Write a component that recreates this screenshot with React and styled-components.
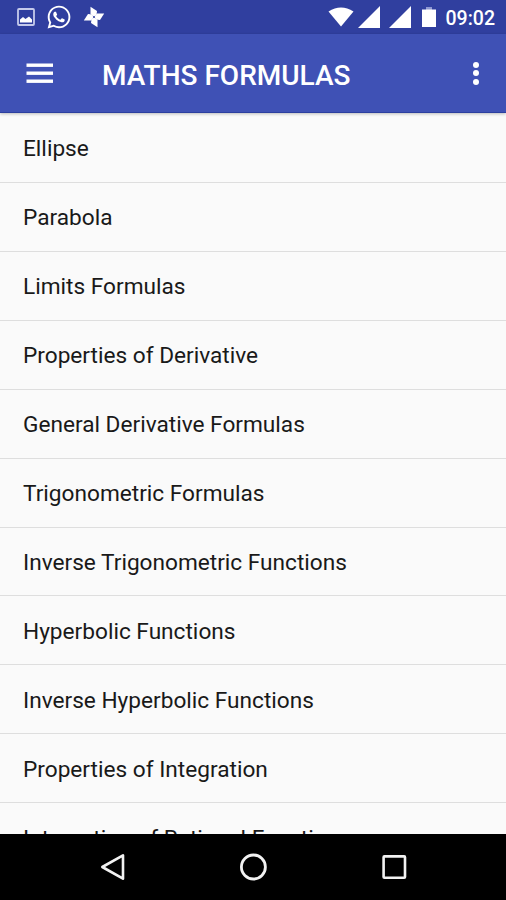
import React from 'react'
import styled, { createGlobalStyle } from 'styled-components'
import { FaWhatsapp } from 'react-icons/fa'

const formulas = [
  'Ellipse',
  'Parabola',
  'Limits Formulas',
  'Properties of Derivative',
  'General Derivative Formulas',
  'Trigonometric Formulas',
  'Inverse Trigonometric Functions',
  'Hyperbolic Functions',
  'Inverse Hyperbolic Functions',
  'Properties of Integration',
  'Integration of Rational Functions',
]

function PictureIcon() {
  return (
    <svg width="18" height="18" viewBox="0 0 18 18">
      <rect x="1" y="1" width="16" height="16" rx="1" fill="none" stroke="#c5caeb" strokeWidth="1.8" />
      <path d="M3 14.5v-3l3-2.5 2.5 2L12 8.500l3 3v3z" fill="#fff" />
    </svg>
  )
}

function PinwheelIcon() {
  return (
    <svg width="22" height="22" viewBox="0 0 22 22" fill="#fff">
      {[0, 90, 180, 270].map((angle) => (
        <path key={angle} d="M7.500 0.800L14 5L13.500 9.500L10.500 10.300L7.500 8z" transform={`rotate(${angle} 11 11)`} />
      ))}
    </svg>
  )
}

function WifiIcon() {
  return (
    <svg width="26" height="20" viewBox="0 0 26 20">
      <path d="M0.500 4.500Q13-3.500 25.500 4.500L13 19.500z" fill="#fff" />
    </svg>
  )
}

function SignalIcon() {
  return (
    <svg width="22" height="22" viewBox="0 0 22 22">
      <path d="M22 0v22H0z" fill="#fff" />
    </svg>
  )
}

function BatteryIcon() {
  return (
    <svg width="17" height="20" viewBox="0 0 17 20">
      <path d="M6 0h6v3H6z" fill="#8f98d2" />
      <path d="M2 2.500h14V20H2z" fill="#fff" />
    </svg>
  )
}

function MenuIcon() {
  return (
    <svg width="27" height="21" viewBox="0 0 27 21" fill="#fff">
      <rect x="0.500" y="0.500" width="26.500" height="3.400" />
      <rect x="0.500" y="8.500" width="26.500" height="3.400" />
      <rect x="0.500" y="16.500" width="26.500" height="3.400" />
    </svg>
  )
}

export default function App() {
  return (
    <Screen>
      <GlobalStyle />
      <StatusBar>
        <Notifications>
          <PictureIcon />
          <FaWhatsapp size={26} />
          <PinwheelIcon />
        </Notifications>
        <System>
          <Signals>
            <WifiIcon />
            <SignalIcon />
          </Signals>
          <SignalIcon />
          <BatteryIcon />
          <Clock>09:02</Clock>
        </System>
      </StatusBar>
      <Toolbar>
        <MenuButton aria-label="Menu">
          <MenuIcon />
        </MenuButton>
        <Title>MATHS FORMULAS</Title>
        <MoreButton aria-label="More options">
          <Dot />
          <Dot />
          <Dot />
        </MoreButton>
      </Toolbar>
      <List>
        {formulas.map((name) => (
          <Row key={name}>{name}</Row>
        ))}
      </List>
      <NavBar>
        <NavButton aria-label="Back">
          <svg width="28" height="30" viewBox="0 0 28 30">
            <path d="M25 3.300v23.400L4.300 15z" fill="none" stroke="#f2f2f2" strokeWidth="2.600" strokeLinejoin="round" />
          </svg>
        </NavButton>
        <NavButton aria-label="Home">
          <svg width="28" height="28" viewBox="0 0 28 28">
            <circle cx="14.400" cy="14" r="12" fill="none" stroke="#f2f2f2" strokeWidth="2.800" />
          </svg>
        </NavButton>
        <NavButton aria-label="Recent apps">
          <svg width="28" height="28" viewBox="0 0 28 28">
            <rect x="3.600" y="3.400" width="21.400" height="21.400" rx="0.800" fill="none" stroke="#f2f2f2" strokeWidth="2.600" />
          </svg>
        </NavButton>
      </NavBar>
    </Screen>
  )
}

const GlobalStyle = createGlobalStyle`
  * {
    box-sizing: border-box;
  }
  body {
    margin: 0;
    overflow: hidden;
    font-family: Roboto, sans-serif;
  }
  button {
    padding: 0;
    border: none;
    background: none;
  }
  svg {
    display: block;
    flex: none;
  }
`

const Screen = styled.div`
  width: 506px;
  height: 900px;
  display: flex;
  flex-direction: column;
  background: #fafafa;
`

const StatusBar = styled.header`
  height: 34px;
  flex: none;
  display: flex;
  justify-content: space-between;
  padding: 0 11px 0 17px;
  background: #303f9f;
  color: #fff;
`

const Notifications = styled.div`
  display: flex;
  align-items: center;
  gap: 11px;
`

const System = styled.div`
  display: flex;
  align-items: center;
  gap: 9px;
`

const Signals = styled.div`
  display: flex;
  align-items: center;
  gap: 4px;
`

const Clock = styled.span`
  font-size: 19.500px;
  font-weight: 500;
  line-height: 34px;
  padding-top: 3px;
`

const Toolbar = styled.div`
  height: 79px;
  flex: none;
  display: flex;
  align-items: center;
  padding: 0 26px;
  background: #3f51b5;
  border-bottom: 1px solid #2c3f9f;
  box-shadow: 0 1px 3px rgba(0, 0, 0, 0.25);
  z-index: 1;
`

const MenuButton = styled.button`
  width: 27px;
`

const Title = styled.h1`
  flex: 1;
  margin: 6px 0 0 49px;
  color: #fff;
  font-size: 28px;
  font-weight: 500;
  line-height: 32px;
`

const MoreButton = styled.button`
  width: 8px;
  display: grid;
  justify-items: center;
  gap: 2.500px;
`

const Dot = styled.span`
  width: 6px;
  height: 6px;
  border-radius: 50%;
  background: #fff;
`

const List = styled.ul`
  flex: 1;
  min-height: 0;
  margin: 0;
  padding: 1px 0 0;
  overflow: hidden;
  list-style: none;
`

const Row = styled.li`
  height: 68.930px;
  display: flex;
  align-items: center;
  padding: 3px 23px 0;
  border-bottom: 1.500px solid #dedede;
  color: #191919;
  font-size: 22.650px;
  line-height: 28px;
`

const NavBar = styled.nav`
  height: 66px;
  flex: none;
  display: flex;
  align-items: center;
  justify-content: center;
  gap: 113px;
  background: #000;
`

const NavButton = styled.button`
  width: 28px;
  display: flex;
  justify-content: center;
`
